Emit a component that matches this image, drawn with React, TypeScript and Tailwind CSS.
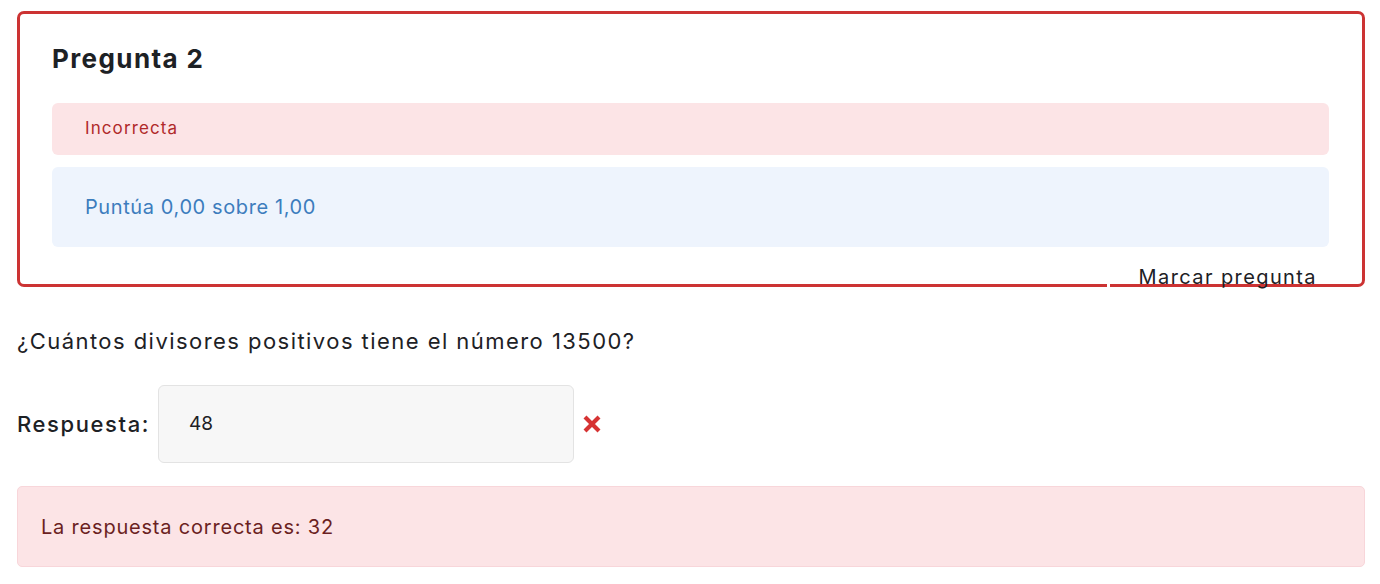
import React from 'react'

const font = { fontFamily: 'Inter, "Open Sans", sans-serif' }

function CrossIcon() {
  return (
    <svg width="20" height="20" viewBox="0 0 20 20" className="shrink-0">
      <path d="M3 3 L17 17 M17 3 L3 17" stroke="#d63333" strokeWidth="4.2" strokeLinecap="butt" />
    </svg>
  )
}

export default function App() {
  return (
    <div className="w-[1380px] h-[584px] bg-white pl-[17px] pr-[15px] pt-[11px]" style={font}>
      {/* Question info card */}
      <div className="relative border-[3px] border-[#cc3333] rounded-[7px] pl-[32px] pr-[33px] pt-[26px]">
        <h3 className="text-[26px] leading-[38px] font-bold text-[#1d2125] tracking-[1.4px]">Pregunta 2</h3>
        <div className="mt-[25px] h-[52px] flex items-center rounded-[6px] bg-[#fce4e6] pl-[33px] text-[17px] tracking-[1.1px] text-[#b02a2a]">
          Incorrecta
        </div>
        <div className="mt-[12px] h-[80px] flex items-center rounded-[6px] bg-[#eef4fd] pl-[33px] text-[20px] tracking-[0.6px] text-[#3d7dbd]">
          Puntúa 0,00 sobre 1,00
        </div>
        <div className="mt-[15px] -mb-[8px] flex justify-end pr-[12px] h-[30px] items-center text-[20px] tracking-[1.4px] text-[#1d2125]">
          Marcar pregunta
        </div>
        <span className="absolute -bottom-[3px] left-[1087px] w-[3px] h-[3px] bg-white" />
      </div>

      {/* Question text */}
      <p className="mt-[38px] text-[22px] leading-[33px] tracking-[1.45px] text-[#1d2125]">
        ¿Cuántos divisores positivos tiene el número 13500?
      </p>

      {/* Answer row */}
      <div className="mt-[27px] flex items-center gap-[8px]">
        <label className="text-[22px] font-medium tracking-[1.6px] text-[#1d2125]">Respuesta:</label>
        <div className="w-[416px] h-[78px] flex items-center rounded-[6px] border border-[#e3e3e3] bg-[#f7f7f7] pl-[30px] text-[19px] text-[#1d2125]">
          48
        </div>
        <CrossIcon />
      </div>

      {/* Feedback */}
      <div className="mt-[23px] h-[81px] flex items-center rounded-[5px] border border-[#f8d6da] bg-[#fce4e6] pl-[23px] text-[20px] tracking-[0.8px] text-[#6b1f22]">
        La respuesta correcta es: 32
      </div>
    </div>
  )
}
